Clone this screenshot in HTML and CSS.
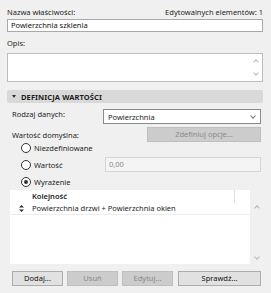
FILE: index.html
```html
<!DOCTYPE html>
<html>
<head>
    <title>Właściwość</title>
    <link rel="stylesheet" href="styles.css">
</head>
<body>
    <div class="panel">
        <div class="topRow">
            <span>Nazwa właściwości:</span>
            <span>Edytowalnych elementów: 1</span>
        </div>
        <div class="textBox">Powierzchnia szklenia</div>

        <div class="label opisLabel">Opis:</div>
        <div class="textArea">
            <div class="miniScroll">
                <span class="chev up"></span>
                <span class="chev down"></span>
            </div>
        </div>

        <div class="sectionHeader">
            <span class="tri"></span>
            <span>DEFINICJA WARTOŚCI</span>
        </div>

        <div class="fieldRow">
            <span class="rowLabel">Rodzaj danych:</span>
            <div class="selectBox">
                <span>Powierzchnia</span>
                <span class="chev down dark"></span>
            </div>
        </div>

        <div class="fieldRow defRow">
            <span class="rowLabel">Wartość domyślna:</span>
            <div class="btn disabled optBtn">Zdefiniuj opcje...</div>
        </div>

        <div class="radioRow firstRadio">
            <span class="radio"></span>
            <span>Niezdefiniowane</span>
        </div>
        <div class="radioRow valueRow">
            <span class="radio"></span>
            <span class="radioText">Wartość</span>
            <div class="valueBox">0,00</div>
        </div>
        <div class="radioRow">
            <span class="radio checked"></span>
            <span>Wyrażenie</span>
        </div>

        <div class="table">
            <div class="tableMain">
                <div class="tableHead">
                    <span class="colOrder">Kolejność</span>
                    <span class="colSep"></span>
                </div>
                <div class="tableRow">
                    <span class="sortIcon">
                        <svg width="5" height="7" viewBox="0 0 5 7"><path d="M2.5 0 L5 2.5 H0 Z M2.5 7 L5 4.5 H0 Z" fill="#333"/></svg>
                    </span>
                    <span>Powierzchnia drzwi + Powierzchnia okien</span>
                </div>
            </div>
            <div class="tableScroll">
                <span class="chev up"></span>
                <span class="chev down"></span>
            </div>
        </div>

        <div class="buttonRow">
            <div class="btn smallBtn">Dodaj...</div>
            <div class="btn smallBtn disabled">Usuń</div>
            <div class="btn smallBtn disabled">Edytuj...</div>
            <div class="btn wideBtn">Sprawdź...</div>
        </div>
    </div>
</body>
</html>
```

FILE: styles.css
```css
body {
    margin: 0;
    background-color: #f0f0f0;
    font-family: "Noto Sans", "Open Sans", sans-serif;
    font-size: 7.5px;
    color: #1e1e1e;
}

.panel {
    padding: 6px 8px 0 7px;
}

.topRow {
    display: flex;
    justify-content: space-between;
    height: 13px;
    line-height: 13px;
}

.textBox {
    height: 11px;
    line-height: 11px;
    border: 1px solid #a9a9a9;
    background-color: #ffffff;
    padding-left: 3px;
    color: #111;
}

.label {
    line-height: 12px;
}

.opisLabel {
    margin-top: 5px;
    height: 16px;
}

.textArea {
    height: 27px;
    border: 1px solid #bdbdbd;
    background-color: #ffffff;
    display: flex;
    justify-content: flex-end;
}

.miniScroll {
    width: 12px;
    display: flex;
    flex-direction: column;
    justify-content: space-between;
    align-items: center;
    padding: 5px 0 5px;
}

.chev {
    width: 3px;
    height: 3px;
    border-left: 1px solid #b8b8b8;
    border-top: 1px solid #b8b8b8;
    display: block;
}

.chev.up {
    transform: rotate(45deg);
    margin-top: 1px;
}

.chev.down {
    transform: rotate(225deg);
    margin-bottom: 1px;
}

.chev.dark {
    border-color: #7a7a7a;
}

.sectionHeader {
    margin-top: 8px;
    height: 13px;
    background-color: #d9d9d9;
    border-radius: 2px;
    display: flex;
    align-items: center;
    font-weight: bold;
    letter-spacing: 0.1px;
}

.tri {
    width: 0;
    height: 0;
    border-left: 2.5px solid transparent;
    border-right: 2.5px solid transparent;
    border-top: 3px solid #333;
    margin: 0 5px 0 5px;
}

.fieldRow {
    display: flex;
    align-items: center;
    justify-content: space-between;
    padding-left: 5px;
    margin-right: 2px;
}

.selectBox {
    margin-top: 6px;
    height: 13px;
    border: 1px solid #8a8a8a;
    background-color: #ffffff;
    display: flex;
    align-items: center;
    justify-content: space-between;
    padding: 0 5px 0 4px;
    width: 147px;
}

.defRow {
    margin-top: 3px;
}

.btn {
    height: 13px;
    line-height: 13px;
    border: 1px solid #adadad;
    background-color: #e1e1e1;
    text-align: center;
    color: #111;
}

.btn.disabled {
    background-color: #cccccc;
    border-color: #bfbfbf;
    color: #8a8a8a;
}

.optBtn {
    width: 112px;
}

.radioRow {
    display: flex;
    align-items: center;
    height: 17px;
    padding-left: 14px;
}

.firstRadio {
    margin-top: -3px;
}

.radio {
    width: 8px;
    height: 8px;
    border: 1px solid #333;
    border-radius: 50%;
    background-color: #ffffff;
    margin-right: 3px;
    position: relative;
}

.radio.checked::after {
    content: "";
    position: absolute;
    left: 2px;
    top: 2px;
    width: 4px;
    height: 4px;
    border-radius: 50%;
    background-color: #333;
}

.radioText {
    width: 71px;
}

.valueBox {
    flex: 1;
    height: 13px;
    line-height: 13px;
    border: 1px solid #d6d6d6;
    background-color: #f4f4f4;
    color: #8a8a8a;
    padding-left: 3px;
    margin-right: 2px;
}

.table {
    margin-left: 3px;
    height: 74px;
    display: flex;
}

.tableMain {
    flex: 1;
    background-color: #ffffff;
}

.tableHead {
    height: 13px;
    line-height: 13px;
    display: flex;
    font-weight: 600;
}

.colOrder {
    padding-left: 22px;
    flex: 1;
}

.colSep {
    width: 15px;
    border-left: 1px solid #e0e0e0;
}

.tableRow {
    height: 11px;
    line-height: 11px;
    border-bottom: 1px solid #ececec;
    display: flex;
    align-items: center;
}

.sortIcon {
    width: 22px;
    display: flex;
    justify-content: center;
}

.tableScroll {
    width: 13px;
    padding: 15px 0 4px;
    display: flex;
    flex-direction: column;
    justify-content: space-between;
    align-items: center;
}

.buttonRow {
    display: flex;
    gap: 4px;
    margin-top: 7px;
    margin-left: 5px;
    margin-right: 2px;
}

.smallBtn {
    width: 49px;
}

.wideBtn {
    flex: 1;
    margin-left: 1px;
}
```
